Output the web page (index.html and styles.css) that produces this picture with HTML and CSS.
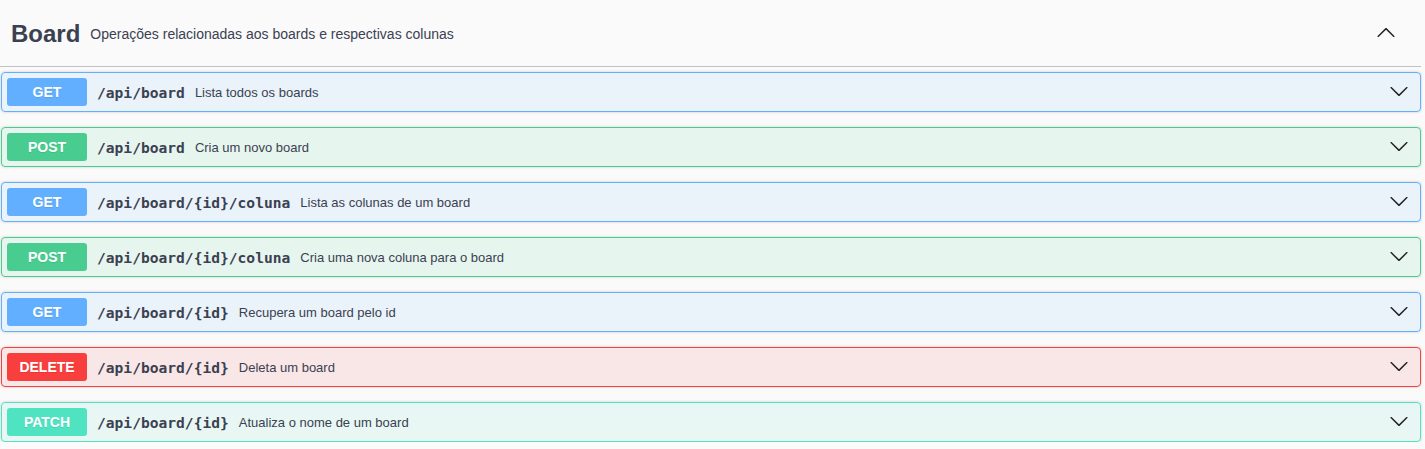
FILE: index.html
```html
<!DOCTYPE html>
<html lang="pt">
<head>
<meta charset="utf-8">
<title>Board</title>
<link rel="stylesheet" href="styles.css">
</head>
<body>
<div class="tag-section">
  <h3 class="tag-header">
    <span class="tag-name">Board</span>
    <small class="tag-desc">Operações relacionadas aos boards e respectivas colunas</small>
    <button class="expand" aria-label="collapse">
      <svg class="arrow up" width="20" height="20" viewBox="0 0 20 20"><path d="M17.418 6.109c.272-.268.709-.268.979 0s.271.701 0 .969l-7.908 7.83c-.27.268-.707.268-.979 0l-7.908-7.83c-.27-.268-.27-.701 0-.969.271-.268.709-.268.979 0L10 13.25l7.418-7.141z"/></svg>
    </button>
  </h3>
  <div class="ops">
    <div class="opblock get"><div class="summary"><span class="method">GET</span><span class="path">/api/board</span><span class="desc">Lista todos os boards</span><svg class="arrow" width="20" height="20" viewBox="0 0 20 20"><path d="M17.418 6.109c.272-.268.709-.268.979 0s.271.701 0 .969l-7.908 7.830c-.27.268-.707.268-.979 0l-7.908-7.83c-.27-.268-.27-.701 0-.969.271-.268.709-.268.979 0L10 13.25l7.418-7.141z"/></svg></div></div>
    <div class="opblock post"><div class="summary"><span class="method">POST</span><span class="path">/api/board</span><span class="desc">Cria um novo board</span><svg class="arrow" width="20" height="20" viewBox="0 0 20 20"><path d="M17.418 6.109c.272-.268.709-.268.979 0s.271.701 0 .969l-7.908 7.83c-.27.268-.707.268-.979 0l-7.908-7.83c-.27-.268-.27-.701 0-.969.271-.268.709-.268.979 0L10 13.25l7.418-7.141z"/></svg></div></div>
    <div class="opblock get"><div class="summary"><span class="method">GET</span><span class="path">/api/board/{id}/coluna</span><span class="desc">Lista as colunas de um board</span><svg class="arrow" width="20" height="20" viewBox="0 0 20 20"><path d="M17.418 6.109c.272-.268.709-.268.979 0s.271.701 0 .969l-7.908 7.83c-.27.268-.707.268-.979 0l-7.908-7.83c-.27-.268-.27-.701 0-.969.271-.268.709-.268.979 0L10 13.25l7.418-7.141z"/></svg></div></div>
    <div class="opblock post"><div class="summary"><span class="method">POST</span><span class="path">/api/board/{id}/coluna</span><span class="desc">Cria uma nova coluna para o board</span><svg class="arrow" width="20" height="20" viewBox="0 0 20 20"><path d="M17.418 6.109c.272-.268.709-.268.979 0s.271.701 0 .969l-7.908 7.83c-.27.268-.707.268-.979 0l-7.908-7.83c-.27-.268-.27-.701 0-.969.271-.268.709-.268.979 0L10 13.25l7.418-7.141z"/></svg></div></div>
    <div class="opblock get"><div class="summary"><span class="method">GET</span><span class="path">/api/board/{id}</span><span class="desc">Recupera um board pelo id</span><svg class="arrow" width="20" height="20" viewBox="0 0 20 20"><path d="M17.418 6.109c.272-.268.709-.268.979 0s.271.701 0 .969l-7.908 7.83c-.27.268-.707.268-.979 0l-7.908-7.83c-.27-.268-.27-.701 0-.969.271-.268.709-.268.979 0L10 13.25l7.418-7.141z"/></svg></div></div>
    <div class="opblock delete"><div class="summary"><span class="method">DELETE</span><span class="path">/api/board/{id}</span><span class="desc">Deleta um board</span><svg class="arrow" width="20" height="20" viewBox="0 0 20 20"><path d="M17.418 6.109c.272-.268.709-.268.979 0s.271.701 0 .969l-7.908 7.83c-.27.268-.707.268-.979 0l-7.908-7.83c-.27-.268-.27-.701 0-.969.271-.268.709-.268.979 0L10 13.25l7.418-7.141z"/></svg></div></div>
    <div class="opblock patch"><div class="summary"><span class="method">PATCH</span><span class="path">/api/board/{id}</span><span class="desc">Atualiza o nome de um board</span><svg class="arrow" width="20" height="20" viewBox="0 0 20 20"><path d="M17.418 6.109c.272-.268.709-.268.979 0s.271.701 0 .969l-7.908 7.83c-.27.268-.707.268-.979 0l-7.908-7.83c-.27-.268-.27-.701 0-.969.271-.268.709-.268.979 0L10 13.25l7.418-7.141z"/></svg></div></div>
  </div>
</div>
</body>
</html>
```

FILE: styles.css
```css
html, body {
  margin: 0;
  padding: 0;
  background: #fafafa;
  font-family: "Liberation Sans", Arial, sans-serif;
  color: #3b4151;
}

.tag-section {
  width: 1421px;
}

.tag-header {
  display: flex;
  align-items: center;
  margin: 0 0 5px 0;
  padding: 2px 0 0 11px;
  box-sizing: border-box;
  border-bottom: 1px solid rgba(59, 65, 81, 0.3);
  height: 67px;
}

.tag-name {
  font-size: 24px;
  font-weight: bold;
  color: #3b4151;
}

.tag-desc {
  flex: 1;
  font-size: 14px;
  font-weight: normal;
  padding-left: 10px;
  color: #3b4151;
}

.expand {
  border: none;
  background: none;
  padding: 0;
  margin: 0 25px 2px 0;
  width: 20px;
  height: 20px;
  display: flex;
}

.arrow path {
  fill: #222;
}

.arrow.up {
  transform: rotate(180deg);
}

.ops {
  display: flex;
  flex-direction: column;
  gap: 15px;
  padding-left: 1px;
}

.opblock {
  width: 1420px;
  box-sizing: border-box;
  border: 1px solid #61affe;
  border-radius: 4px;
  box-shadow: 0 0 3px rgba(0, 0, 0, 0.19);
}

.summary {
  display: flex;
  align-items: center;
  padding: 5px;
  height: 38px;
  box-sizing: border-box;
}

.method {
  display: flex;
  align-items: center;
  justify-content: center;
  width: 80px;
  height: 28px;
  border-radius: 3px;
  font-size: 14px;
  font-weight: bold;
  color: #fff;
  text-shadow: 0 1px 0 rgba(0, 0, 0, 0.1);
  flex-shrink: 0;
}

.path {
  font-family: "DejaVu Sans Mono", "Liberation Mono", monospace;
  font-size: 14.6px;
  font-weight: bold;
  padding: 0 10px;
  color: #3b4151;
}

.desc {
  flex: 1;
  font-size: 13px;
  color: #3b4151;
}

.summary .arrow {
  margin: 0 6px 3px 0;
  flex-shrink: 0;
}

.get { background: rgba(97, 175, 254, 0.1); border-color: #61affe; }
.get .method { background: #61affe; }

.post { background: rgba(73, 204, 144, 0.1); border-color: #49cc90; }
.post .method { background: #49cc90; }

.delete { background: rgba(249, 62, 62, 0.1); border-color: #f93e3e; }
.delete .method { background: #f93e3e; }

.patch { background: rgba(80, 227, 194, 0.1); border-color: #50e3c2; }
.patch .method { background: #50e3c2; }
```
